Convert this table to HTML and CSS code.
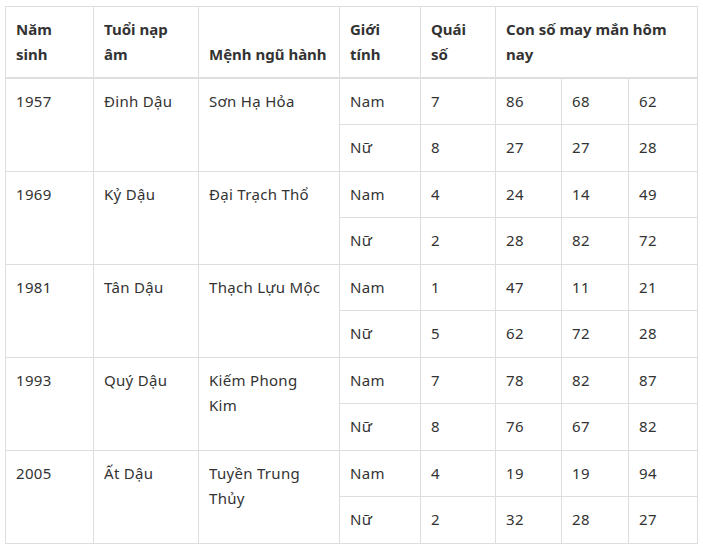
FILE: index.html
```html
<!DOCTYPE html>
<html lang="vi">
<head>
<meta charset="utf-8">
<link rel="stylesheet" href="styles.css">
</head>
<body>
<table class="luck">
  <colgroup>
    <col class="c1"><col class="c2"><col class="c3"><col class="c4"><col class="c5"><col class="c6"><col class="c7"><col class="c8">
  </colgroup>
  <thead>
    <tr>
      <th>Năm sinh</th>
      <th>Tuổi nạp âm</th>
      <th>Mệnh ngũ hành</th>
      <th>Giới tính</th>
      <th>Quái số</th>
      <th colspan="3">Con số may mắn hôm nay</th>
    </tr>
  </thead>
  <tbody>
    <tr><td rowspan="2">1957</td><td rowspan="2">Đinh Dậu</td><td rowspan="2">Sơn Hạ Hỏa</td><td>Nam</td><td>7</td><td>86</td><td>68</td><td>62</td></tr>
    <tr><td>Nữ</td><td>8</td><td>27</td><td>27</td><td>28</td></tr>
    <tr><td rowspan="2">1969</td><td rowspan="2">Kỷ Dậu</td><td rowspan="2">Đại Trạch Thổ</td><td>Nam</td><td>4</td><td>24</td><td>14</td><td>49</td></tr>
    <tr><td>Nữ</td><td>2</td><td>28</td><td>82</td><td>72</td></tr>
    <tr><td rowspan="2">1981</td><td rowspan="2">Tân Dậu</td><td rowspan="2">Thạch Lựu Mộc</td><td>Nam</td><td>1</td><td>47</td><td>11</td><td>21</td></tr>
    <tr><td>Nữ</td><td>5</td><td>62</td><td>72</td><td>28</td></tr>
    <tr><td rowspan="2">1993</td><td rowspan="2">Quý Dậu</td><td rowspan="2">Kiếm Phong Kim</td><td>Nam</td><td>7</td><td>78</td><td>82</td><td>87</td></tr>
    <tr><td>Nữ</td><td>8</td><td>76</td><td>67</td><td>82</td></tr>
    <tr><td rowspan="2">2005</td><td rowspan="2">Ất Dậu</td><td rowspan="2">Tuyền Trung Thủy</td><td>Nam</td><td>4</td><td>19</td><td>19</td><td>94</td></tr>
    <tr><td>Nữ</td><td>2</td><td>32</td><td>28</td><td>27</td></tr>
  </tbody>
</table>
</body>
</html>
```

FILE: styles.css
```css
html, body {
  margin: 0;
  padding: 0;
  background: #fff;
}
body {
  font-family: "Noto Sans", "Open Sans", sans-serif;
  font-size: 15px;
  color: #333;
}
.luck {
  margin: 6px 0 0 5px;
  width: 692px;
  border-collapse: collapse;
  table-layout: fixed;
}
.c1 { width: 88px; }
.c2 { width: 105px; }
.c3 { width: 141px; }
.c4 { width: 81px; }
.c5 { width: 75px; }
.c6 { width: 66px; }
.c7 { width: 67px; }
.c8 { width: 69px; }
.luck th, .luck td {
  border: 1px solid #dedede;
  padding: 10px 12px 10px 10px;
  line-height: 25px;
  text-align: left;
}
.luck th {
  font-weight: 700;
  vertical-align: bottom;
  border-bottom-width: 2px;
}
.luck td {
  vertical-align: top;
  letter-spacing: 0.3px;
}
.luck tbody tr {
  height: 46.5px;
}
```
